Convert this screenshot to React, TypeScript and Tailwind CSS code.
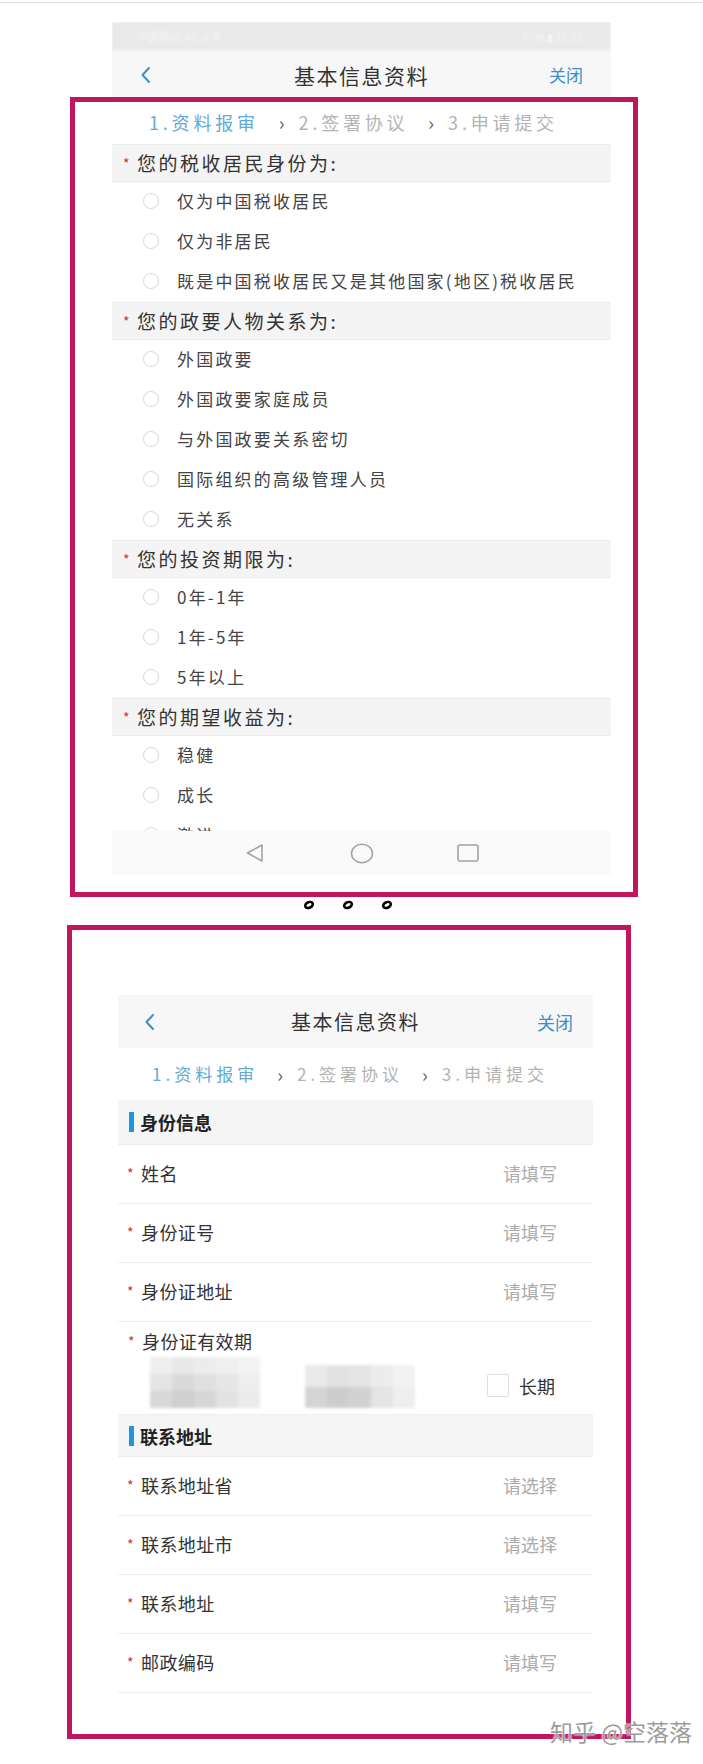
import React from "react";

const sections = [
  {
    title: "您的税收居民身份为:",
    options: ["仅为中国税收居民", "仅为非居民", "既是中国税收居民又是其他国家(地区)税收居民"],
  },
  {
    title: "您的政要人物关系为:",
    options: ["外国政要", "外国政要家庭成员", "与外国政要关系密切", "国际组织的高级管理人员", "无关系"],
  },
  { title: "您的投资期限为:", options: ["0年-1年", "1年-5年", "5年以上"] },
  { title: "您的期望收益为:", options: ["稳健", "成长", "激进"] },
];

const leftCells = [
  "#eeeeee", "#e8e8e8", "#ececec", "#f0f0f0", "#f3f3f3",
  "#e4e4e4", "#dadada", "#e0e0e0", "#e6e6e6", "#eeeeee",
  "#d8d8d8", "#cfcfcf", "#d6d6d6", "#e2e2e2", "#ebebeb",
];
const rightCells = [
  "#e9e9e9", "#e2e2e2", "#e5e5e5", "#ececec", "#f2f2f2",
  "#d4d4d4", "#cdcdcd", "#d2d2d2", "#e4e4e4", "#eeeeee",
];

function Back() {
  return (
    <svg width="11" height="18" viewBox="0 0 11 18">
      <path d="M9 2 L2.5 9 L9 16" stroke="#3d8fc7" strokeWidth="2" fill="none" strokeLinecap="round" strokeLinejoin="round" />
    </svg>
  );
}

function Steps({ className, gap }: { className: string; gap: string }) {
  return (
    <div className={"flex items-center leading-[24px] " + className}>
      <span className="text-[#63a9d6]">1.资料报审</span>
      <span className={"mr-[14px] tracking-normal text-[19px] text-[#666] " + gap}>›</span>
      <span className="text-[#b3b3b3]">2.签署协议</span>
      <span className={"mr-[14px] tracking-normal text-[19px] text-[#666] " + gap}>›</span>
      <span className="text-[#b3b3b3]">3.申请提交</span>
    </div>
  );
}

function Star() {
  return <span className="w-[14px] text-[14px] leading-none text-[#cc3333]">*</span>;
}

function FormRow({ label, hint }: { label: string; hint: string }) {
  return (
    <div className="h-[59px] flex items-center pl-[9px] pr-[36px] pb-[3px] bg-white border-b border-[#eeeeee]">
      <Star />
      <span className="text-[18px] leading-[24px] tracking-[0.4px] text-[#333]">{label}</span>
      <span className="ml-auto text-[18px] leading-[24px] text-[#ababab]">{hint}</span>
    </div>
  );
}

function GroupTitle({ title, h }: { title: string; h: string }) {
  return (
    <div className={"flex items-center pl-[11px] bg-[#f5f5f5] border-b border-[#ececec] " + h}>
      <span className="w-[5px] h-[20px] bg-[#1d95e0] mr-[6px]" />
      <span className="text-[18px] leading-[24px] font-bold text-[#222]">{title}</span>
    </div>
  );
}

function Dot() {
  return (
    <svg width="12" height="10" viewBox="0 0 12 10">
      <ellipse cx="6" cy="5" rx="4" ry="2.8" transform="rotate(-25 6 5)" fill="#fff" stroke="#000" strokeWidth="2.6" />
    </svg>
  );
}

export default function App() {
  return (
    <div className="relative w-[703px] h-[1764px] bg-white overflow-hidden font-['Noto_Sans_CJK_SC','Noto_Sans',sans-serif]">
      {/* top rule */}
      <div className="pt-[2px]">
        <div className="h-px bg-[#dedede]" />
      </div>

      {/* phone screen 1 */}
      <div className="mt-[19px] ml-[112px] w-[499px] h-[853px] flex flex-col overflow-hidden">
        <div className="h-[28px] shrink-0 bg-[#e9e9e9] flex items-center justify-between pl-[25px] pr-[28px] text-[11px] text-white/60 blur-[0.8px]">
          <span>中国移动 4G .ıl 令</span>
          <span>97% ▮ 11:11</span>
        </div>
        <div className="h-[50px] shrink-0 bg-[#f7f7f7] flex items-center">
          <div className="w-[80px] pl-[28px] flex">
            <Back />
          </div>
          <span className="flex-1 text-center text-[21px] leading-[26px] tracking-[1.5px] text-[#333]">基本信息资料</span>
          <span className="w-[80px] pr-[28px] text-right text-[17px] leading-[22px] text-[#3d8fc7]">关闭</span>
        </div>
        <Steps className="h-[44px] shrink-0 pl-[37px] bg-white text-[18px] tracking-[3.8px]" gap="ml-[20px]" />
        <div className="flex-1 overflow-hidden">
          {sections.map((s) => (
            <div key={s.title}>
              <div className="h-[38px] flex items-center pl-[11px] bg-[#f4f4f4] border-y border-[#ebebeb]">
                <Star />
                <span className="text-[19px] leading-[24px] tracking-[2.5px] text-[#333]">{s.title}</span>
              </div>
              {s.options.map((o) => (
                <div key={o} className="h-[40px] flex items-center pl-[31px] pb-[3px] gap-[18px] bg-white">
                  <span className="w-[16px] h-[16px] rounded-full border border-[#d8d8d8] bg-white shrink-0" />
                  <span className="text-[17px] leading-[22px] tracking-[2.2px] text-[#444]">{o}</span>
                </div>
              ))}
            </div>
          ))}
        </div>
        <div className="h-[44px] shrink-0 bg-[#fafafa] flex items-center">
          <svg className="ml-[133px]" width="20" height="20" viewBox="0 0 20 20">
            <path d="M17 2 L2.5 10 L17 18 Z" fill="none" stroke="#a3a3a3" strokeWidth="1.6" strokeLinejoin="round" />
          </svg>
          <svg className="ml-[85px]" width="24" height="21" viewBox="0 0 24 21">
            <ellipse cx="12" cy="10.5" rx="10.5" ry="9.2" fill="none" stroke="#a3a3a3" strokeWidth="1.6" />
          </svg>
          <svg className="ml-[83px]" width="22" height="18" viewBox="0 0 22 18">
            <rect x="1" y="1" width="20" height="16" rx="2" fill="none" stroke="#a3a3a3" strokeWidth="1.6" />
          </svg>
        </div>
      </div>

      {/* highlight frame 1 */}
      <div className="absolute left-[70px] top-[97px] w-[568px] h-[800px] border-[5px] border-[#c2155f]" />

      {/* ellipsis dots */}
      <div className="mt-[22px] h-[16px] flex items-center pl-[303px] gap-[27px]">
        <Dot />
        <Dot />
        <Dot />
      </div>

      {/* highlight frame 2 with phone screen 2 */}
      <div className="mt-[12px] ml-[67px] w-[564px] h-[814px] border-[5px] border-[#c2155f] pt-[65px] pl-[46px]">
        <div className="w-[475px] h-[698px] flex flex-col">
          <div className="h-[53px] shrink-0 bg-[#f7f7f7] flex items-center">
            <div className="w-[80px] pl-[26px] flex">
              <Back />
            </div>
            <span className="flex-1 text-center text-[20px] leading-[26px] tracking-[1.5px] text-[#333]">基本信息资料</span>
            <span className="w-[80px] pr-[20px] text-right text-[18px] leading-[24px] text-[#3d8fc7]">关闭</span>
          </div>
          <Steps className="h-[52px] shrink-0 pl-[34px] bg-white text-[17px] tracking-[4px]" gap="ml-[19px]" />
          <GroupTitle title="身份信息" h="h-[45px]" />
          <FormRow label="姓名" hint="请填写" />
          <FormRow label="身份证号" hint="请填写" />
          <FormRow label="身份证地址" hint="请填写" />
          <div className="h-[93px] shrink-0 bg-white border-b border-[#eeeeee] flex flex-col">
            <div className="h-[24px] mt-[7px] flex items-center pl-[10px]">
              <Star />
              <span className="text-[18px] leading-[24px] tracking-[0.4px] text-[#333]">身份证有效期</span>
            </div>
            <div className="h-[57px] mt-[4px] flex items-center pl-[32px] pr-[38px]">
              <div className="self-end mb-[6px] w-[110px] h-[51px] grid grid-cols-5 blur-[1.5px]">
                {leftCells.map((c, i) => (
                  <span key={i} style={{ backgroundColor: c }} />
                ))}
              </div>
              <div className="self-end mb-[6px] ml-[45px] w-[110px] h-[43px] grid grid-cols-5 blur-[1.5px]">
                {rightCells.map((c, i) => (
                  <span key={i} style={{ backgroundColor: c }} />
                ))}
              </div>
              <span className="ml-auto w-[22px] h-[23px] border border-[#dedede] rounded-[2px] bg-white" />
              <span className="ml-[10px] text-[18px] leading-[24px] text-[#333]">长期</span>
            </div>
          </div>
          <GroupTitle title="联系地址" h="h-[42px]" />
          <FormRow label="联系地址省" hint="请选择" />
          <FormRow label="联系地址市" hint="请选择" />
          <FormRow label="联系地址" hint="请填写" />
          <FormRow label="邮政编码" hint="请填写" />
        </div>
      </div>

      {/* watermark */}
      <div className="absolute left-[550px] top-[1716px] text-[23px] leading-[30px] text-[#9c9c9c] [text-shadow:0_0_2px_#fff,0_0_2px_#fff]">
        知乎 @空落落
      </div>
    </div>
  );
}
